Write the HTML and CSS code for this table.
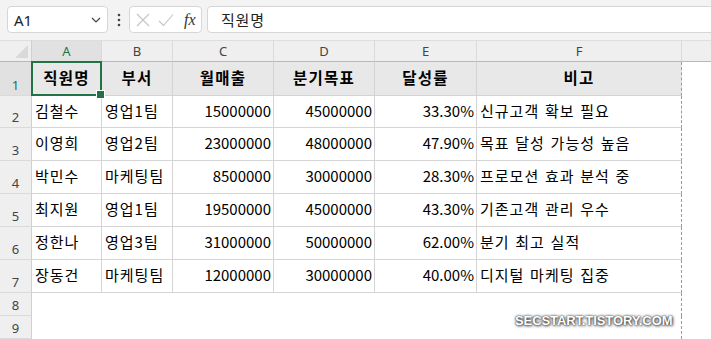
FILE: index.html
```html
<!DOCTYPE html>
<html lang="ko">
<head>
<meta charset="utf-8">
<title>Excel</title>
<link rel="stylesheet" href="styles.css">
</head>
<body>
<div class="app">
  <div class="bar">
    <div class="namebox">
      <span class="ref">A1</span>
      <svg class="chev" width="10" height="6" viewBox="0 0 10 6"><polyline points="1,1 5,5 9,1" fill="none" stroke="#444" stroke-width="1.2"/></svg>
    </div>
    <div class="dots">
      <svg width="4" height="14" viewBox="0 0 4 14"><circle cx="2" cy="2" r="1.3" fill="#444"/><circle cx="2" cy="7" r="1.3" fill="#444"/><circle cx="2" cy="12" r="1.3" fill="#444"/></svg>
    </div>
    <div class="fbtns">
      <svg width="14" height="14" viewBox="0 0 14 14"><path d="M1 1 L13 13 M13 1 L1 13" stroke="#c4c4c4" stroke-width="1.1" fill="none"/></svg>
      <svg width="16" height="14" viewBox="0 0 16 14"><path d="M1 8 L5.5 12.5 L15 1.5" stroke="#c4c4c4" stroke-width="1.1" fill="none"/></svg>
      <span class="fx">fx</span>
    </div>
    <div class="formula">직원명</div>
  </div>

  <div class="sheet">
    <div class="corner"><span class="tri"></span></div>
    <div class="ch sel">A</div>
    <div class="ch">B</div>
    <div class="ch">C</div>
    <div class="ch">D</div>
    <div class="ch">E</div>
    <div class="ch">F</div>
    <div class="ch last"></div>

    <div class="rh sel">1</div>
    <div class="c hd active">직원명</div>
    <div class="c hd">부서</div>
    <div class="c hd">월매출</div>
    <div class="c hd">분기목표</div>
    <div class="c hd">달성률</div>
    <div class="c hd fcol">비고</div>
    <div class="g"></div>

    <div class="rh">2</div>
    <div class="c">김철수</div>
    <div class="c">영업1팀</div>
    <div class="c num">15000000</div>
    <div class="c num">45000000</div>
    <div class="c num">33.30%</div>
    <div class="c fcol">신규고객 확보 필요</div>
    <div class="g"></div>

    <div class="rh">3</div>
    <div class="c">이영희</div>
    <div class="c">영업2팀</div>
    <div class="c num">23000000</div>
    <div class="c num">48000000</div>
    <div class="c num">47.90%</div>
    <div class="c fcol">목표 달성 가능성 높음</div>
    <div class="g"></div>

    <div class="rh">4</div>
    <div class="c">박민수</div>
    <div class="c">마케팅팀</div>
    <div class="c num">8500000</div>
    <div class="c num">30000000</div>
    <div class="c num">28.30%</div>
    <div class="c fcol">프로모션 효과 분석 중</div>
    <div class="g"></div>

    <div class="rh">5</div>
    <div class="c">최지원</div>
    <div class="c">영업1팀</div>
    <div class="c num">19500000</div>
    <div class="c num">45000000</div>
    <div class="c num">43.30%</div>
    <div class="c fcol">기존고객 관리 우수</div>
    <div class="g"></div>

    <div class="rh">6</div>
    <div class="c">정한나</div>
    <div class="c">영업3팀</div>
    <div class="c num">31000000</div>
    <div class="c num">50000000</div>
    <div class="c num">62.00%</div>
    <div class="c fcol">분기 최고 실적</div>
    <div class="g"></div>

    <div class="rh">7</div>
    <div class="c">장동건</div>
    <div class="c">마케팅팀</div>
    <div class="c num">12000000</div>
    <div class="c num">30000000</div>
    <div class="c num">40.00%</div>
    <div class="c fcol">디지털 마케팅 집중</div>
    <div class="g"></div>

    <div class="rh">8</div>
    <div class="e"></div><div class="e"></div><div class="e"></div><div class="e"></div><div class="e"></div>
    <div class="e fcol"></div>
    <div class="g"></div>

    <div class="rh">9</div>
    <div class="e"></div><div class="e"></div><div class="e"></div><div class="e"></div><div class="e"></div>
    <div class="e fcol"></div>
    <div class="g"></div>
  </div>

  <div class="watermark">SECSTART.TISTORY.COM</div>
</div>
</body>
</html>
```
FILE: styles.css
```css
* { box-sizing: border-box; }
html, body { margin: 0; padding: 0; }
body {
  width: 711px;
  height: 339px;
  overflow: hidden;
  background: #ffffff;
  font-family: "Noto Sans CJK KR", "Noto Sans", sans-serif;
  color: #000;
}
.app { position: relative; width: 711px; height: 339px; overflow: hidden; }

.bar {
  height: 40px;
  background: #f3f3f3;
  display: flex;
  align-items: flex-start;
  padding: 6px 0 0 7px;
}
.namebox {
  width: 101px;
  height: 27px;
  background: #fff;
  border: 1px solid #d6d6d6;
  border-radius: 4px;
  display: flex;
  align-items: center;
  justify-content: space-between;
  padding: 0 6px 0 6px;
}
.ref { font-family: "Noto Sans", sans-serif; font-size: 15px; color: #222; }
.chev { margin-top: 1px; }
.dots {
  width: 21px;
  height: 27px;
  display: flex;
  align-items: center;
  justify-content: center;
}
.fbtns {
  width: 73px;
  height: 27px;
  background: #fff;
  border: 1px solid #d6d6d6;
  border-radius: 4px;
  display: flex;
  align-items: center;
  gap: 8px;
  padding-left: 6px;
}
.fx {
  font-family: "Liberation Serif", serif;
  font-style: italic;
  font-size: 16px;
  color: #333;
  margin-left: 2px;
}
.formula {
  flex: 1;
  margin-left: 5px;
  margin-right: -6px;
  height: 27px;
  background: #fff;
  border: 1px solid #d6d6d6;
  border-radius: 4px;
  padding-left: 13px;
  font-size: 15px;
  line-height: 25px;
  letter-spacing: 0.8px;
  color: #222;
}

.sheet {
  display: grid;
  grid-template-columns: 32px 70px 71px 101px 101px 102px 205px 30px;
  grid-template-rows: 22px 34px 32px 33px 33px 33px 33px 33px 23px 23px;
}
.corner {
  background: #efefef;
  border-right: 1px solid #cfcfcf;
  border-bottom: 1px solid #b8b8b8;
  border-top: 1px solid #dedede;
  display: flex;
  align-items: flex-end;
  justify-content: flex-end;
  padding: 0 3px 3px 0;
}
.tri {
  width: 0; height: 0;
  border-left: 13px solid transparent;
  border-bottom: 13px solid #d9d9d9;
}
.ch {
  background: #efefef;
  border-top: 1px solid #dedede;
  border-right: 1px solid #dadada;
  border-bottom: 1px solid #b8b8b8;
  display: flex;
  align-items: center;
  justify-content: center;
  font-family: "Noto Sans", sans-serif;
  font-size: 13px;
  color: #444;
}
.ch.last { border-right: none; }
.ch.sel { background: #e1e1e1; color: #217346; }
.rh {
  background: #efefef;
  border-right: 1px solid #cfcfcf;
  border-bottom: 1px solid #dadada;
  display: flex;
  align-items: flex-end;
  justify-content: center;
  padding-bottom: 1px;
  font-family: "Noto Sans", sans-serif;
  font-size: 13px;
  color: #444;
}
.rh.sel { background: #e1e1e1; color: #217346; }

.c {
  border-right: 1px solid #d4d4d4;
  border-bottom: 1px solid #d4d4d4;
  display: flex;
  align-items: center;
  padding: 0 3px 3px 3px;
  font-size: 15px;
  letter-spacing: 1px;
  word-spacing: 0.5px;
  white-space: nowrap;
  overflow: hidden;
}
.c.num { justify-content: flex-end; padding-right: 2px; letter-spacing: 0; word-spacing: 0; }
.c.hd {
  background: #e8e8e8;
  justify-content: center;
  font-weight: bold;
  font-size: 15.5px;
  letter-spacing: 1.2px;
}
.c.fcol, .e.fcol { border-right: 1px dashed #9a9a9a; }
.e { background: #fff; }
.g { background: #fff; }

.active { position: relative; overflow: visible; }
.active::after {
  content: "";
  position: absolute;
  left: -1px; top: -1px; right: -1px; bottom: -1px;
  border: 2px solid #217346;
}
.active::before {
  content: "";
  position: absolute;
  right: -4px; bottom: -4px;
  width: 7px; height: 7px;
  background: #217346;
  border: 1px solid #fff;
  z-index: 2;
}

.watermark {
  position: absolute;
  left: 515px;
  top: 313px;
  font-family: "Liberation Sans", sans-serif;
  font-weight: bold;
  font-size: 13px;
  letter-spacing: -0.1px;
  color: #fff;
  text-shadow: 0 0 1px #333, 0 0 3px #444, 1px 1px 3px #555;
}
```
